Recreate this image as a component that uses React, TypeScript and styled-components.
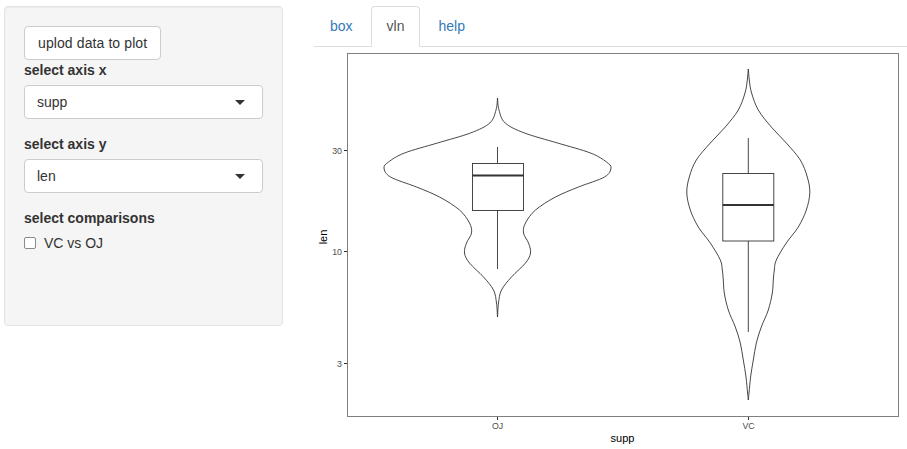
import React from "react";
import styled, { createGlobalStyle } from "styled-components";

const Global = createGlobalStyle`
  html, body { margin: 0; padding: 0; background: #fff; }
  body { font-family: "Liberation Sans", Arial, Helvetica, sans-serif; font-size: 14px; color: #333; line-height: 20px; }
  * { box-sizing: border-box; }
`;

const Page = styled.div`
  display: flex;
  align-items: flex-start;
  padding: 6px 0 0 4px;
  gap: 31px;
  width: 907px;
  height: 449px;
  overflow: hidden;
`;

const Well = styled.div`
  width: 279px;
  height: 320px;
  flex: none;
  background: #f5f5f5;
  border: 1px solid #e3e3e3;
  border-radius: 4px;
  box-shadow: inset 0 1px 1px rgba(0, 0, 0, 0.05);
  padding: 19px;
  display: flex;
  flex-direction: column;
  align-items: flex-start;
`;

const Button = styled.button`
  height: 34px;
  padding: 6px 13px 6px 13px;
  font: inherit;
  color: #333;
  background: #fff;
  border: 1px solid #ccc;
  border-radius: 4px;
  line-height: 20px;
  letter-spacing: 0.1px;
`;

const Label = styled.div<{ $top?: number }>`
  font-weight: bold;
  line-height: 20px;
  margin-top: ${(p) => p.$top ?? 0}px;
  margin-bottom: 5px;
`;

const Select = styled.div`
  width: 239px;
  height: 34px;
  background: #fff;
  border: 1px solid #ccc;
  border-radius: 4px;
  padding: 0 17px 0 12px;
  display: flex;
  align-items: center;
  justify-content: space-between;
`;

const Caret = styled.span`
  width: 0;
  height: 0;
  border-left: 5px solid transparent;
  border-right: 5px solid transparent;
  border-top: 5px solid #333;
`;

const CheckRow = styled.div`
  display: flex;
  align-items: center;
  height: 20px;
`;

const Box = styled.span`
  width: 12px;
  height: 12px;
  border: 1px solid #8a8a8a;
  border-radius: 2px;
  background: #fff;
  margin-right: 8px;
`;

const Main = styled.div`
  flex: 1;
  display: flex;
  flex-direction: column;
`;

const Tabs = styled.div`
  display: flex;
  gap: 2px;
  border-bottom: 1px solid #ddd;
  height: 41px;
`;

const Tab = styled.div<{ $active?: boolean }>`
  height: 41px;
  padding: 10px 15px;
  line-height: 19px;
  border: 1px solid ${(p) => (p.$active ? "#ddd" : "transparent")};
  border-bottom-color: ${(p) => (p.$active ? "#fff" : "transparent")};
  border-radius: 4px 4px 0 0;
  background: ${(p) => (p.$active ? "#fff" : "transparent")};
  color: ${(p) => (p.$active ? "#555" : "#337ab7")};
`;

const Plot = styled.svg`
  display: block;
  width: 593px;
  height: 402px;
`;

type P = [number, number];

function catmull(pts: P[]): string {
  let d = `M${pts[0][0]},${pts[0][1]}`;
  for (let i = 0; i < pts.length - 1; i++) {
    const p0 = pts[i - 1] || pts[i];
    const p1 = pts[i];
    const p2 = pts[i + 1];
    const p3 = pts[i + 2] || p2;
    const c1x = p1[0] + (p2[0] - p0[0]) / 6;
    const c1y = p1[1] + (p2[1] - p0[1]) / 6;
    const c2x = p2[0] - (p3[0] - p1[0]) / 6;
    const c2y = p2[1] - (p3[1] - p1[1]) / 6;
    d += ` C${c1x.toFixed(1)},${c1y.toFixed(1)} ${c2x.toFixed(1)},${c2y.toFixed(1)} ${p2[0].toFixed(1)},${p2[1]}`;
  }
  return d;
}

function violin(cx: number, prof: P[]): string {
  const left: P[] = prof.map(([y, w]) => [cx - w, y]);
  const right: P[] = [...prof].reverse().map(([y, w]) => [cx + w, y]);
  return catmull(left) + " " + catmull(right).replace(/^M/, "L") + " Z";
}

const ojProfile: P[] = [
  [98, 0], [110, 1.5], [123, 7.7], [133, 27], [143, 60], [153, 93], [162, 109], [168, 113.5],
  [177, 107], [187, 81], [197, 58], [210, 38], [223, 28], [233, 26], [243, 31], [253, 33],
  [263, 28], [277, 14], [290, 4], [303, 1], [317, 0],
];

const vcProfile: P[] = [
  [69, 0], [80, 1], [93, 3.3], [110, 10], [127, 23], [143, 38], [160, 52], [177, 59], [193, 61.5],
  [210, 58], [227, 50], [243, 38], [260, 28], [270, 26], [280, 25], [293, 24], [310, 20],
  [327, 13], [343, 8], [360, 5], [377, 2.3], [393, 0.7], [400, 0],
];

const Chart: React.FC = () => (
  <Plot viewBox="314 47 593 402">
    <rect x={347.5} y={53.5} width={551} height={363} fill="#fff" stroke="#7f7f7f" strokeWidth={1} />
    <g fill="none" stroke="#333" strokeWidth={0.9}>
      <path d={violin(497.5, ojProfile)} />
      <path d={violin(748.3, vcProfile)} />
    </g>
    <g stroke="#333" strokeWidth={0.9} fill="#fff">
      <line x1={497.5} y1={147} x2={497.5} y2={163} />
      <line x1={497.5} y1={210} x2={497.5} y2={269} />
      <rect x={472.5} y={163.5} width={51} height={47} />
      <line x1={472.5} y1={175.5} x2={523.5} y2={175.5} strokeWidth={2} />
      <line x1={748.3} y1={138} x2={748.3} y2={173} />
      <line x1={748.3} y1={241} x2={748.3} y2={332} />
      <rect x={722.8} y={173.5} width={51} height={67.5} />
      <line x1={722.8} y1={205} x2={773.8} y2={205} strokeWidth={2} />
    </g>
    <g stroke="#333" strokeWidth={1}>
      <line x1={344} y1={150.5} x2={347} y2={150.5} />
      <line x1={344} y1={251.5} x2={347} y2={251.5} />
      <line x1={344} y1={363.5} x2={347} y2={363.5} />
      <line x1={497.5} y1={417} x2={497.5} y2={420} />
      <line x1={748.5} y1={417} x2={748.5} y2={420} />
    </g>
    <g fontFamily="Liberation Sans, Arial, sans-serif" fontSize={8.8} fill="#4d4d4d">
      <text x={342} y={153.5} textAnchor="end">30</text>
      <text x={342} y={254.5} textAnchor="end">10</text>
      <text x={342} y={366.5} textAnchor="end">3</text>
      <text x={497.5} y={428.5} textAnchor="middle">OJ</text>
      <text x={748.5} y={428.5} textAnchor="middle">VC</text>
    </g>
    <g fontFamily="Liberation Sans, Arial, sans-serif" fontSize={11} fill="#000">
      <text x={622.5} y={441.5} textAnchor="middle">supp</text>
      <text x={326.5} y={237} textAnchor="middle" transform="rotate(-90 326.5 237)">len</text>
    </g>
  </Plot>
);

export default function App() {
  return (
    <>
      <Global />
      <Page>
        <Well>
          <Button>uplod data to plot</Button>
          <Label>select axis x</Label>
          <Select>
            <span>supp</span>
            <Caret />
          </Select>
          <Label $top={15}>select axis y</Label>
          <Select>
            <span>len</span>
            <Caret />
          </Select>
          <Label $top={15}>select comparisons</Label>
          <CheckRow>
            <Box />
            <span>VC vs OJ</span>
          </CheckRow>
        </Well>
        <Main>
          <Tabs>
            <Tab>box</Tab>
            <Tab $active>vln</Tab>
            <Tab>help</Tab>
          </Tabs>
          <Chart />
        </Main>
      </Page>
    </>
  );
}
